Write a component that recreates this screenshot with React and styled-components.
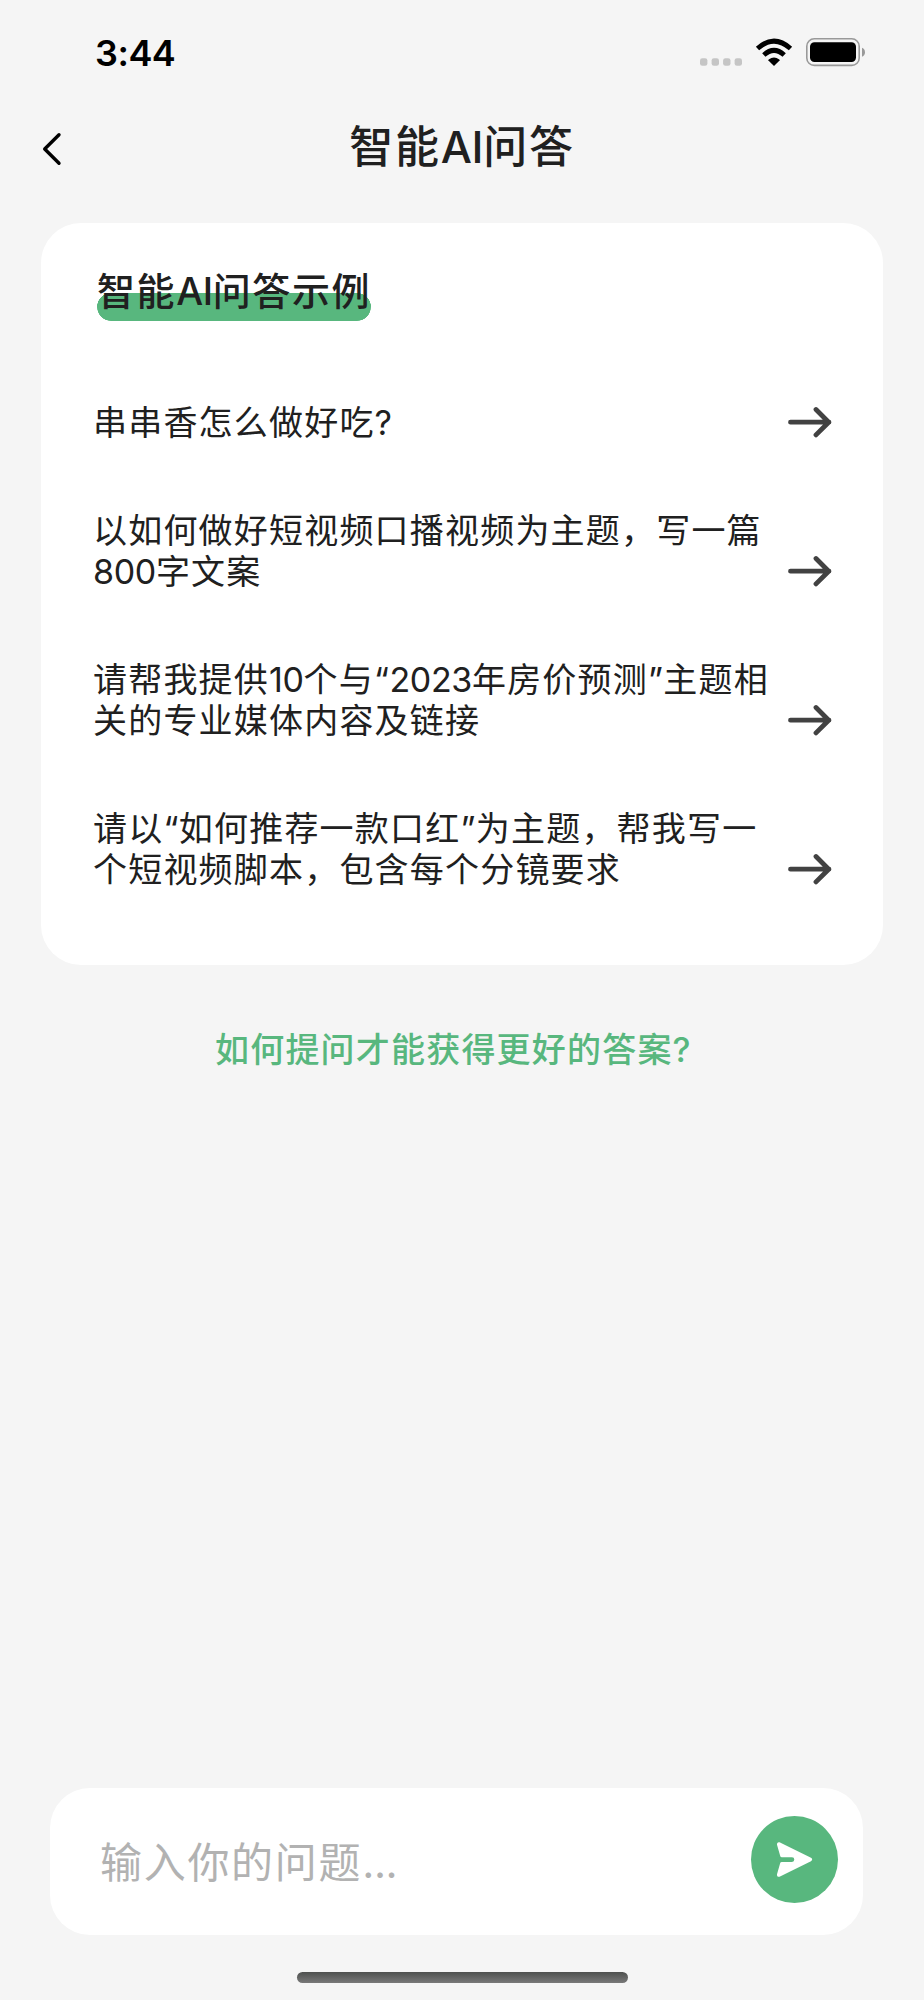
import React from 'react';
import styled, { createGlobalStyle } from 'styled-components';

const GlobalStyle = createGlobalStyle`
  * {
    box-sizing: border-box;
  }

  body {
    margin: 0;
    background: #f5f5f5;
    font-family: Inter, 'Noto Sans CJK SC', sans-serif;
    color: #202020;
  }
`;

const Screen = styled.main`
  width: 924px;
  height: 2000px;
  display: flex;
  flex-direction: column;
  background: #f5f5f5;
  overflow: hidden;
`;

const StatusBar = styled.header`
  height: 104px;
  display: flex;
  justify-content: space-between;
  align-items: center;
  padding: 0 59px 0 95px;
`;

const Time = styled.span`
  font-size: 36px;
  font-weight: 600;
  line-height: 44px;
  letter-spacing: -0.5px;
  color: #000;
  margin-top: 2px;
`;

const NavBar = styled.nav`
  height: 119px;
  display: grid;
  grid-template-columns: 200px 1fr 200px;
  align-items: start;
`;

const BackButton = styled.button`
  width: 26px;
  height: 40px;
  margin: 25px 0 0 39px;
  padding: 0;
  border: 0;
  background: none;
`;

const Title = styled.h1`
  margin: 13px 0 0;
  font-size: 44px;
  font-weight: 500;
  line-height: 60px;
  letter-spacing: 1.8px;
  text-align: center;
  white-space: nowrap;
`;

const Latin = styled.span`
  letter-spacing: ${(props) => (props.$quote ? '0.012em' : '-0.01em')};
`;

const Card = styled.section`
  height: 742px;
  margin: 0 41px;
  padding: 43px 51px 0 52px;
  border-radius: 40px;
  background: #fff;
`;

const CardTitle = styled.h2`
  width: 274px;
  height: 55px;
  margin: 0 0 81px 4px;
  border-radius: 0 0 14px 14px;
  background: radial-gradient(circle at 14px 41px, #58b77e 13.7px, transparent 14.2px) 0 0 / 14px 100% no-repeat,
    radial-gradient(circle at 0 41px, #58b77e 13.7px, transparent 14.2px) 100% 0 / 14px 100% no-repeat,
    linear-gradient(#58b77e, #58b77e) 14px 27px / 246px 28px no-repeat;
  font-size: 38px;
  font-weight: 500;
  line-height: 50px;
  letter-spacing: 1.6px;
  white-space: nowrap;
`;

const QuestionList = styled.ul`
  margin: 0;
  padding: 0;
  list-style: none;
  display: flex;
  flex-direction: column;
  gap: 66.5px;
`;

const Question = styled.li`
  display: flex;
  justify-content: space-between;
  align-items: flex-end;
`;

const QuestionText = styled.p`
  margin: 0;
  font-size: 34px;
  line-height: 41.25px;
  letter-spacing: 1.2px;
  white-space: nowrap;
`;

const Line = styled.span`
  display: block;
`;

const ArrowIcon = styled.svg`
  width: 46px;
  height: 41px;
  flex: none;
`;

const HelpLink = styled.a`
  margin: 61px 0 0 215px;
  font-size: 34px;
  font-weight: 500;
  line-height: 48px;
  letter-spacing: 1.2px;
  color: #58b77e;
  white-space: nowrap;
`;

const Composer = styled.footer`
  height: 147px;
  margin: auto 61px 0 50px;
  padding: 0 25px 4px 50px;
  display: flex;
  justify-content: space-between;
  align-items: center;
  flex: none;
  border-radius: 40px;
  background: #fff;
`;

const Placeholder = styled.span`
  margin-top: 6px;
  font-size: 42px;
  line-height: 60px;
  letter-spacing: 1.7px;
  color: #b2b2b2;
`;

const SendButton = styled.button`
  width: 87px;
  height: 87px;
  padding: 0;
  border: 0;
  border-radius: 50%;
  background: #58b77e;
`;

const HomeIndicator = styled.div`
  width: 331px;
  height: 11px;
  margin: 36.5px 0 17.5px 297px;
  flex: none;
  border-radius: 6px;
  background: linear-gradient(#4e504e, #797979);
`;

const questions = [
  ['串串香怎么做好吃?'],
  ['以如何做好短视频口播视频为主题，写一篇', '800字文案'],
  ['请帮我提供10个与“2023年房价预测”主题相', '关的专业媒体内容及链接'],
  ['请以“如何推荐一款口红”为主题，帮我写一', '个短视频脚本，包含每个分镜要求'],
];

// Latin runs are set tighter than the Chinese characters around them
const Mixed = ({ text }) =>
  text.split(/([A-Za-z0-9.]+|[“”])/).map((part, i) =>
    i % 2 ? (
      <Latin key={i} $quote={/[“”]/.test(part)}>
        {part}
      </Latin>
    ) : (
      part
    )
  );

const StatusIcons = () => (
  <svg width="166" height="30" viewBox="699 37 166 30">
    {[700, 711.6, 723.1, 734.6].map((x) => (
      <rect key={x} x={x} y="58.2" width="7.4" height="7.6" rx="2.4" fill="#c5c5c5" />
    ))}
    <path d="M774 66L768.4 60.4Q768.2 60 768.7 59.6Q774 55.6 779.3 59.6Q779.8 60 779.6 60.4Z" />
    <g fill="none" stroke="#000" strokeWidth="4.9">
      <path d="M757.5 48.5Q774 33.7 790.5 48.5" />
      <path d="M763.8 55Q774 45.8 784.2 55" />
    </g>
    <rect x="806.8" y="38.8" width="52.4" height="26.6" rx="7.5" fill="none" stroke="#999" strokeWidth="1.6" />
    <rect x="810" y="42.3" width="46" height="19.8" rx="4.5" />
    <path d="M862 47.8Q865 49.2 865 52.2Q865 55.4 862 56.8Z" fill="#999" />
  </svg>
);

const App = () => {
  return (
    <>
      <GlobalStyle />
      <Screen>
        <StatusBar>
          <Time>3:44</Time>
          <StatusIcons />
        </StatusBar>
        <NavBar>
          <BackButton aria-label="返回">
            <svg width="26" height="40" viewBox="39 129 26 40" fill="none" stroke="#000" strokeWidth="3.4" strokeLinecap="round" strokeLinejoin="round">
              <path d="M59 134.8L44.7 149L59 163.2" />
            </svg>
          </BackButton>
          <Title>
            <Mixed text="智能AI问答" />
          </Title>
        </NavBar>
        <Card>
          <CardTitle>
            <Mixed text="智能AI问答示例" />
          </CardTitle>
          <QuestionList>
            {questions.map((lines) => (
              <Question key={lines[0]}>
                <QuestionText>
                  {lines.map((line) => (
                    <Line key={line}>
                      <Mixed text={line} />
                    </Line>
                  ))}
                </QuestionText>
                <ArrowIcon viewBox="0 0 46 41" fill="none" stroke="#424242" strokeWidth="4.8" strokeLinecap="round" strokeLinejoin="round">
                  <path d="M4.5 20.2H43M30 7.5L42.7 20.2L30 32.9" />
                </ArrowIcon>
              </Question>
            ))}
          </QuestionList>
        </Card>
        <HelpLink>如何提问才能获得更好的答案?</HelpLink>
        <Composer>
          <Placeholder>
            <Mixed text="输入你的问题..." />
          </Placeholder>
          <SendButton aria-label="发送">
            <svg width="87" height="87" viewBox="0 0 87 87">
              <path
                d="M28.5 26.2L60 41.8Q62.4 43.5 60 45.2L28.5 60.8Q25.8 61.2 26 58.2L29.3 46.8Q29.7 45.9 30.8 45.9H41Q43.3 45.7 43.3 43.5Q43.3 41.3 41 41.2H30.8Q29.7 41.2 29.3 40.2L26 28.8Q25.8 25.8 28.5 26.2Z"
                fill="#fff"
              />
            </svg>
          </SendButton>
        </Composer>
        <HomeIndicator />
      </Screen>
    </>
  );
};

export default App;
